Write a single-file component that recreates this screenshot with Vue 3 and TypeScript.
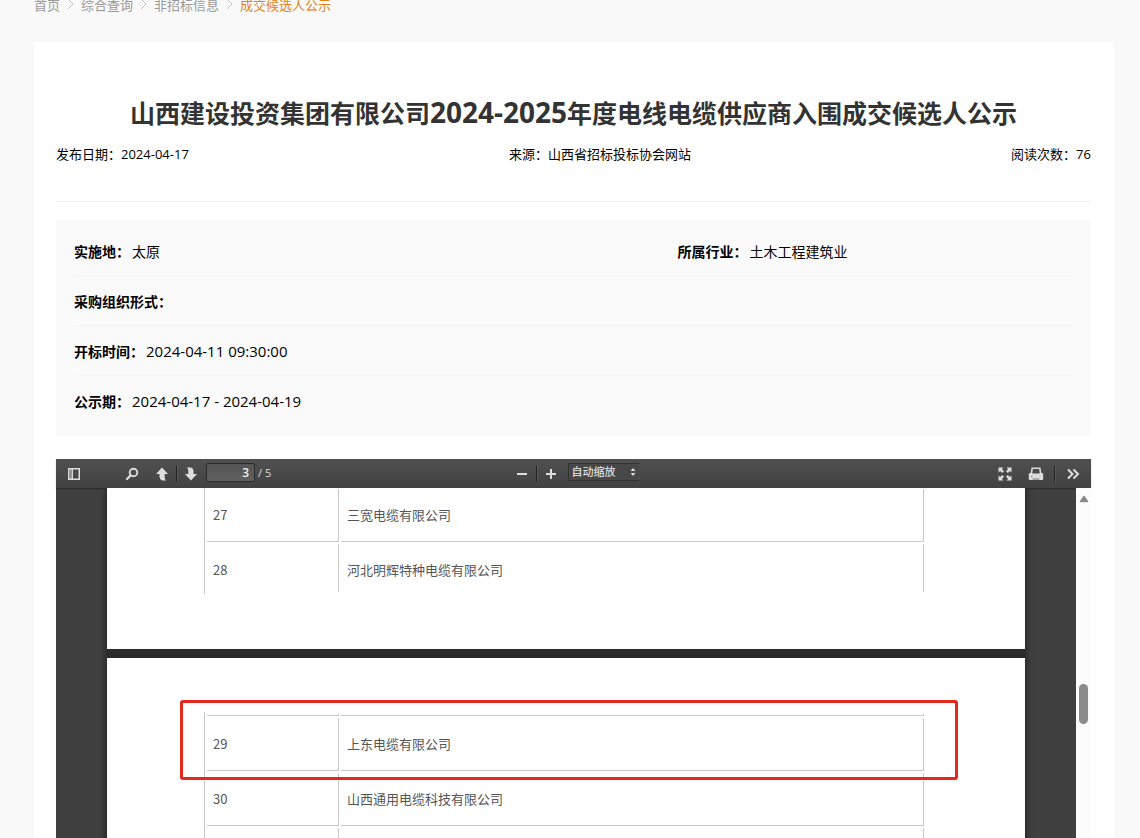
<script setup lang="ts">
import { ref } from 'vue'

interface DocRow {
  no: string
  name: string
}

const crumbs: string[] = ['首页', '综合查询', '非招标信息']
const pageNumber = ref('3')
const zoomMode = ref('auto')

const firstPage: DocRow[] = [
  { no: '27', name: '三宽电缆有限公司' },
  { no: '28', name: '河北明辉特种电缆有限公司' },
]
const secondPage: DocRow[] = [
  { no: '29', name: '上东电缆有限公司' },
  { no: '30', name: '山西通用电缆科技有限公司' },
]
</script>

<template>
  <div class="site">
    <nav class="crumbs" aria-label="breadcrumb">
      <template v-for="c in crumbs" :key="c">
        <a href="#">{{ c }}</a>
        <svg width="7" height="12" viewBox="0 0 7 12"><path d="M1 1l5 5-5 5" fill="none" stroke="#c4c4c4" /></svg>
      </template>
      <a href="#" class="current">成交候选人公示</a>
    </nav>

    <main class="card">
      <h1>山西建设投资集团有限公司<span class="years">2024-2025</span>年度电线电缆供应商入围成交候选人公示</h1>
      <div class="meta">
        <span>发布日期：2024-04-17</span>
        <span>来源：山西省招标投标协会网站</span>
        <span>阅读次数：76</span>
      </div>

      <dl class="info">
        <div class="line">
          <div class="pair wide"><dt>实施地：</dt><dd>太原</dd></div>
          <div class="pair"><dt>所属行业：</dt><dd>土木工程建筑业</dd></div>
        </div>
        <div class="line">
          <div class="pair"><dt>采购组织形式：</dt><dd></dd></div>
        </div>
        <div class="line">
          <div class="pair"><dt>开标时间：</dt><dd class="date">2024-04-11 09:30:00</dd></div>
        </div>
        <div class="line">
          <div class="pair"><dt>公示期：</dt><dd class="date">2024-04-17 - 2024-04-19</dd></div>
        </div>
      </dl>

      <section class="viewer">
        <div class="toolbar">
          <div class="group left">
            <button type="button" aria-label="切换侧栏">
              <svg width="14" height="14" viewBox="0 0 14 14"><path fill="#ddd" fill-rule="evenodd" d="M1 1h12v12H1zM2.500 2.500v9H3.500v-9zM6 2.500v9h5.500v-9z" /><path fill="#999" d="M3.500 2.500h1.500v9H3.500z" /></svg>
            </button>
            <button type="button" class="find" aria-label="查找">
              <svg width="14" height="14" viewBox="0 0 14 14"><circle cx="8.500" cy="5.500" r="3.800" fill="none" stroke="#ddd" stroke-width="1.900" /><path d="M5.600 8.400L2 12" stroke="#ddd" stroke-width="2.200" stroke-linecap="round" /></svg>
            </button>
            <button type="button" class="up" aria-label="上一页">
              <svg width="14" height="14" viewBox="0 0 14 14"><path fill="#ddd" d="M7 .5L13 7H9.700v3.500q0 1.500 1.300 3H7q-2.500-.8-2.500-3.500V7H1z" /></svg>
            </button>
            <i class="sep"></i>
            <button type="button" aria-label="下一页">
              <svg width="14" height="14" viewBox="0 0 14 14"><path fill="#ddd" d="M7 13.500L1 7h3.300V3.500Q4.300 2 3 .5h4q2.500.8 2.500 3.500v3H13z" /></svg>
            </button>
            <input v-model="pageNumber" class="page-input" aria-label="页码" />
            <span class="total">/ 5</span>
          </div>

          <div class="group">
            <button type="button" aria-label="缩小">
              <svg width="14" height="14" viewBox="0 0 14 14"><path d="M2 7h10" stroke="#ddd" stroke-width="2" /></svg>
            </button>
            <i class="sep"></i>
            <button type="button" aria-label="放大">
              <svg width="14" height="14" viewBox="0 0 14 14"><path d="M2 7h10M7 2v10" stroke="#ddd" stroke-width="2" /></svg>
            </button>
            <div class="zoom">
              <select v-model="zoomMode" aria-label="缩放">
                <option value="auto">自动缩放</option>
              </select>
              <svg width="6" height="8" viewBox="0 0 6 8"><path fill="#ddd" d="M3 0l2.500 3h-5zM3 8L.5 5h5z" /></svg>
            </div>
          </div>

          <div class="group right">
            <button type="button" aria-label="全屏">
              <svg width="14" height="14" viewBox="0 0 14 14"><path fill="#ddd" d="M.5.5h5L3.900 2.100 6 4.200 4.200 6 2.100 3.900.5 5.500zM13.500.5v5l-1.600-1.600L9.800 6 8 4.200l2.100-2.100L8.500.5zM.5 13.500v-5l1.600 1.600L4.200 8 6 9.800l-2.100 2.100 1.600 1.600zM13.500 13.500h-5l1.600-1.600L8 9.800 9.800 8l2.100 2.100 1.600-1.600z" /></svg>
            </button>
            <button type="button" class="print" aria-label="打印">
              <svg width="16" height="14" viewBox="0 0 16 14"><path fill="#ddd" fill-rule="evenodd" d="M3.500.5h9l.8 5.500H14q1.200 0 1.200 1.200V12q0 1-1 1H1.800q-1 0-1-1V7.200Q.8 6 2 6h.7zM4.800 2l-.5 4.500h7.400l-.5-4.500z" /><path d="M3 9.500h1.500M4.500 12h7" stroke="#777" /></svg>
            </button>
            <i class="sep"></i>
            <button type="button" class="more" aria-label="工具">
              <svg width="14" height="14" viewBox="0 0 14 14"><path d="M2 2.500L6.500 7 2 11.500M7.500 2.500L12 7l-4.500 4.500" fill="none" stroke="#ddd" stroke-width="2" /></svg>
            </button>
          </div>
        </div>

        <div class="stage">
          <div class="canvas">
            <div class="pages">
              <div class="sheet first">
                <table>
                  <tbody>
                    <tr v-for="r in firstPage" :key="r.no">
                      <td class="no">{{ r.no }}</td>
                      <td>{{ r.name }}</td>
                    </tr>
                  </tbody>
                </table>
              </div>
              <div class="sheet second">
                <table>
                  <tbody>
                    <tr class="stub"><td class="no"></td><td></td></tr>
                    <tr v-for="r in secondPage" :key="r.no">
                      <td class="no">{{ r.no }}</td>
                      <td>{{ r.name }}</td>
                    </tr>
                    <tr><td class="no"></td><td></td></tr>
                  </tbody>
                </table>
                <div class="mark"></div>
              </div>
            </div>
          </div>
          <div class="scroll">
            <svg width="10" height="8" viewBox="0 0 10 8"><path d="M5 1.500L8.500 6.500h-7z" fill="#8b8b8b" stroke="#8b8b8b" stroke-width="1.500" stroke-linejoin="round" /></svg>
            <div class="thumb"></div>
          </div>
        </div>
      </section>
    </main>
  </div>
</template>

<style>
body {
  margin: 0;
  background: #f9f9f9;
}
</style>

<style scoped>
* {
  box-sizing: border-box;
}
.site {
  display: flex;
  flex-direction: column;
  height: 100vh;
  overflow: hidden;
  font-family: "Open Sans", "Noto Sans CJK SC", sans-serif;
  font-size: 13px;
  color: #000;
}
.crumbs {
  display: flex;
  align-items: center;
  gap: 7px;
  height: 8px;
  margin: 0 34px 34px;
}
.crumbs a {
  color: #999;
  text-decoration: none;
}
.crumbs .current {
  color: #e08519;
}
.card {
  flex: 1;
  min-height: 0;
  display: flex;
  flex-direction: column;
  margin: 0 26px 0 34px;
  padding: 50px 23px 0 22px;
  background: #fff;
}
h1 {
  margin: 0;
  font-size: 25px;
  line-height: 40px;
  font-weight: 700;
  color: #333;
  text-align: center;
}
.years {
  font-size: 28px;
}
.meta {
  display: flex;
  justify-content: space-between;
  height: 69px;
  padding-top: 11px;
  line-height: 20px;
  border-bottom: 1px solid #eee;
}
.info {
  margin: 18px 0 23px;
  padding: 6px 18px 10px;
  background: #fafafa;
  font-size: 14px;
}
.line {
  display: flex;
  height: 50px;
  border-bottom: 1px solid #f6f6f6;
}
.line:last-child {
  border-bottom-color: transparent;
}
.pair {
  display: flex;
  align-items: center;
  gap: 2px;
}
.wide {
  flex: 0 0 60%;
  margin-right: 4px;
}
dt {
  font-weight: 700;
}
dd {
  margin: 0;
}
.date {
  font-size: 15px;
}
.viewer {
  flex: 1;
  min-height: 0;
  display: flex;
  flex-direction: column;
}
.toolbar {
  position: relative;
  display: flex;
  height: 29px;
  flex: none;
  background: linear-gradient(#505050, #424242);
  box-shadow: 0 1px 1px rgba(0, 0, 0, 0.3);
}
.group {
  display: flex;
  align-items: center;
}
.left {
  flex: 1 0 0;
  padding-left: 4px;
}
.right {
  flex: 1 0 0;
  justify-content: flex-end;
  padding-right: 4px;
}
button {
  display: flex;
  align-items: center;
  justify-content: center;
  width: 28px;
  height: 25px;
  padding: 0;
  border: 0;
  background: none;
}
.find {
  margin-left: 30px;
}
.up {
  margin-left: 2px;
}
.print {
  margin: 0 4px 0 3px;
}
.more {
  margin-left: 4px;
}
.sep {
  width: 1px;
  height: 16px;
  background: #222;
  box-shadow: 1px 0 0 #5a5a5a;
}
.page-input {
  width: 49px;
  height: 19px;
  margin: 0 3px 2px 1px;
  padding: 0 5px;
  border: 1px solid #2b2b2b;
  border-radius: 2px;
  background: linear-gradient(#555, #606060);
  color: #f2f2f2;
  font: 600 12px "Open Sans", sans-serif;
  text-align: right;
}
.total {
  padding-bottom: 3px;
  color: #ddd;
  font-size: 11px;
}
.zoom {
  position: relative;
  width: 72px;
  height: 18px;
  margin: 0 0 4px 3px;
}
.zoom select {
  display: block;
  width: 100%;
  height: 100%;
  padding: 0 3px;
  border: 1px solid #333;
  border-right-color: #4a4a4a;
  background: #484848;
  color: #f2f2f2;
  font: 11px/14px "Open Sans", "Noto Sans CJK SC", sans-serif;
  appearance: none;
}
.zoom svg {
  position: absolute;
  right: 4px;
  top: 5px;
  pointer-events: none;
}
.stage {
  flex: 1;
  min-height: 0;
  display: flex;
}
.canvas {
  flex: 1;
  background: #404040;
  overflow: hidden;
}
.pages {
  width: 90%;
  margin: 0 auto;
  display: flex;
  flex-direction: column;
  gap: 9px;
  background: #2b2b2b;
  box-shadow: 0 0 8px rgba(0, 0, 0, 0.6);
}
.sheet {
  position: relative;
  padding-left: 97px;
  padding-right: 99px;
  background: #fff;
}
.first {
  padding-bottom: 55px;
}
.second {
  padding-top: 54px;
  padding-bottom: 60px;
}
table {
  width: 100%;
  table-layout: fixed;
  border-collapse: separate;
  border-spacing: 2px;
  border-left: 1px solid #c8c8c8;
  font-family: "Noto Sans CJK SC", sans-serif;
  font-size: 13px;
  line-height: 20px;
  color: #555;
}
.first table {
  margin-top: -1px;
}
td {
  height: 53px;
  padding: 0 6px;
  border-right: 1px solid #c8c8c8;
  border-bottom: 1px solid #c8c8c8;
}
.no {
  width: 132px;
}
.first tr:last-child td {
  height: 48px;
  padding-top: 4px;
  border-bottom: 0;
}
.stub td {
  height: 2px;
}
.mark {
  position: absolute;
  top: 42px;
  left: 73px;
  right: 67px;
  height: 80px;
  border: 3px solid #e4281d;
  border-radius: 3px;
}
.scroll {
  position: relative;
  width: 15px;
  padding: 7px 0 0 3px;
  background: #fcfcfc;
  line-height: 8px;
}
.scroll svg {
  display: block;
}
.thumb {
  position: absolute;
  top: 56%;
  left: 3px;
  width: 9px;
  height: 40px;
  border-radius: 5px;
  background: #8b8b8b;
}
</style>
